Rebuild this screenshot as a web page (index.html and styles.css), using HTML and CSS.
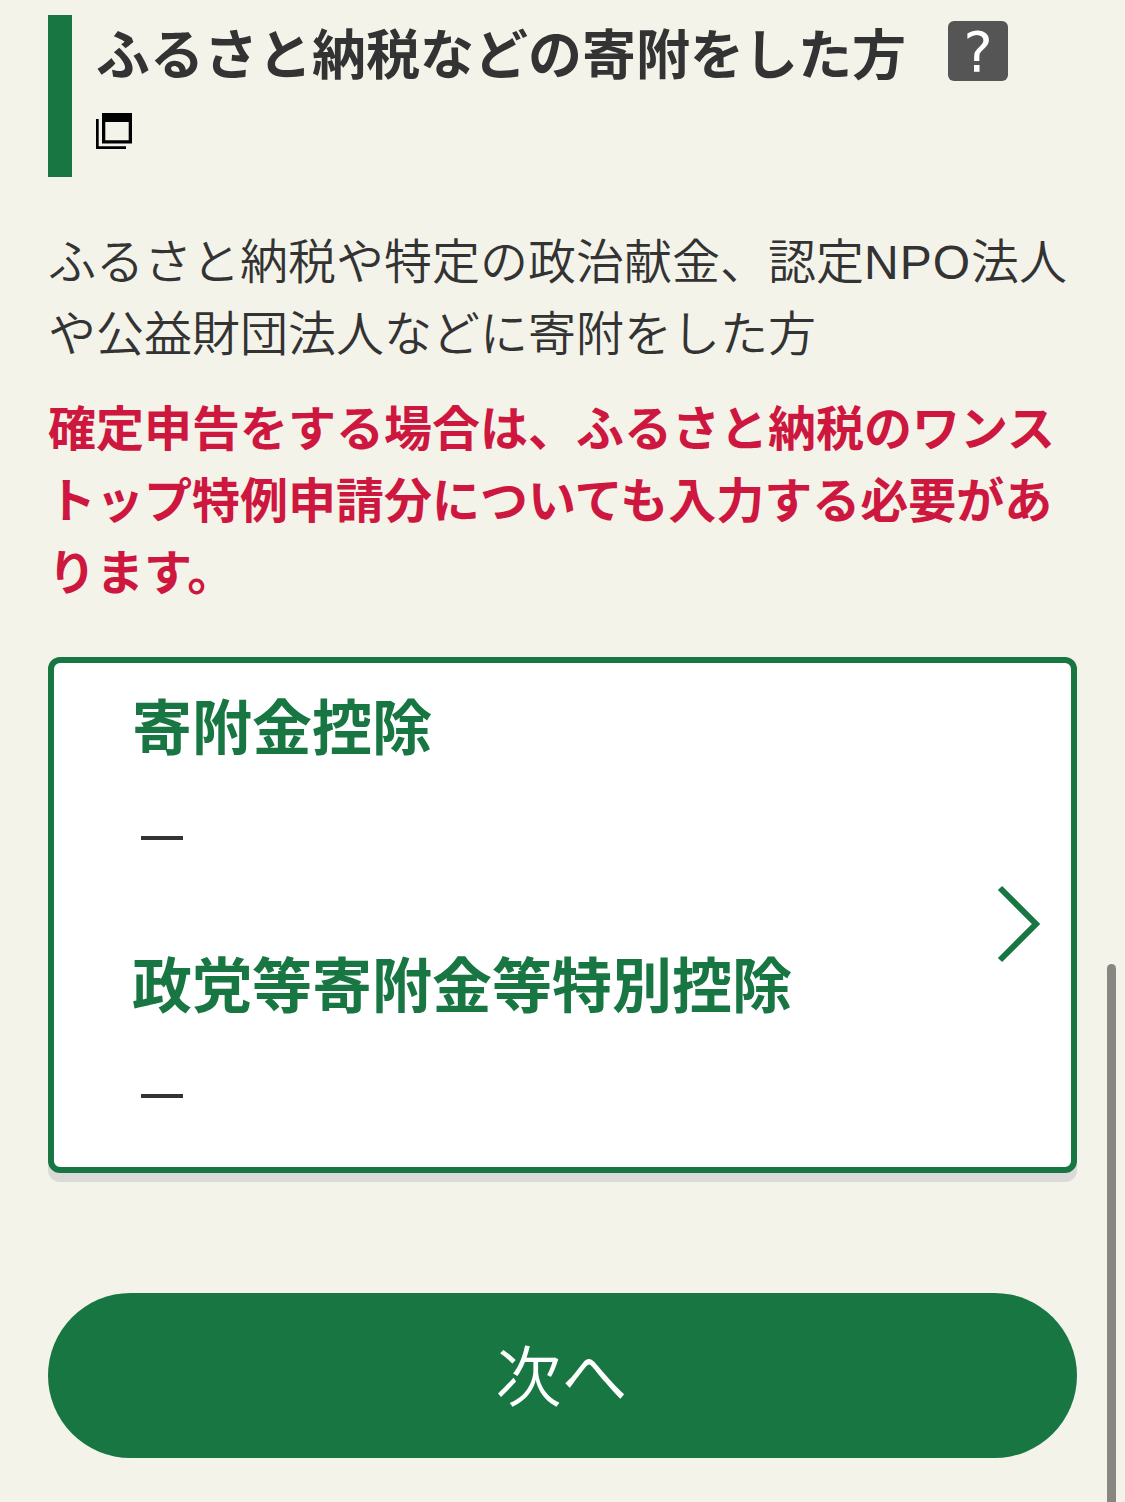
FILE: index.html
```html
<!DOCTYPE html>
<html lang="ja">
<head>
<meta charset="utf-8">
<title>寄附金控除</title>
<link rel="stylesheet" href="styles.css">
</head>
<body>
<main class="page">
  <h2 class="heading">
    <span class="heading-text">ふるさと納税などの寄附をした方</span>
    <span class="help">?</span>
    <svg class="window-icon" viewBox="0 0 36 36"><path d="M0 6h2.700v27.300H30V36H0z"/><path fill-rule="evenodd" d="M6 0h30v30.500H6zM9.300 9v18.300h23.400V9z"/></svg>
  </h2>
  <p class="lead">ふるさと納税や特定の政治献金、認定<span class="latin">NPO</span>法人<br>や公益財団法人などに寄附をした方</p>
  <p class="warning">確定申告をする場合は、ふるさと納税のワンス<br>トップ特例申請分についても入力する必要があ<br>ります。</p>
  <a class="card">
    <span class="card-body">
      <span class="item">寄附金控除</span>
      <span class="value"><span class="dash"></span></span>
      <span class="item">政党等寄附金等特別控除</span>
      <span class="value last"><span class="dash"></span></span>
    </span>
    <svg class="chevron" viewBox="0 0 44 78"><path d="M3 3 39 39 3 75"/></svg>
  </a>
  <button class="next">次へ</button>
</main>
<div class="scrollbar"></div>
</body>
</html>
```
FILE: styles.css
```css
* { box-sizing: border-box; }
body {
  margin: 0;
  height: 1502px;
  overflow: hidden;
  background: #f4f3ea;
  color: #333;
  font-family: "Noto Sans CJK JP", sans-serif;
}
.page { padding: 15px 48px 0; }
.heading {
  display: flex;
  flex-wrap: wrap;
  align-content: flex-start;
  height: 162px;
  margin: 0;
  padding-left: 24px;
  border-left: 24px solid #187643;
  font-size: 54px;
  line-height: 81px;
  font-weight: 700;
}
.heading-text { height: 85px; margin-top: -4px; white-space: nowrap; }
.help {
  width: 60px;
  height: 60px;
  margin: 6px 60px 0 42px;
  border-radius: 6px;
  background: #555;
  color: #fff;
  font: 400 55px/63px "DejaVu Sans", sans-serif;
  text-align: center;
}
.window-icon { width: 36px; height: 36px; margin-top: 17px; fill: #000; }
.lead, .warning {
  margin: 0;
  font-size: 48px;
  line-height: 72px;
  white-space: nowrap;
}
.lead { height: 144px; margin-top: 45px; font-weight: 350; }
.latin {
  font-family: "Liberation Sans", sans-serif;
  line-height: 1;
  letter-spacing: 1px;
}
.warning { margin-top: 23px; color: #ce173f; font-weight: 700; }
.card {
  display: flex;
  justify-content: space-between;
  height: 516px;
  margin-top: 52px;
  padding: 16px 30px 0 78px;
  border: 6px solid #187643;
  border-radius: 12px;
  background: #fff;
  box-shadow: 0 9px 0 #dadad8;
}
.card-body { display: flex; flex-direction: column; }
.item {
  color: #187643;
  font-size: 60px;
  line-height: 90px;
  font-weight: 700;
}
.value { height: 168px; padding: 67px 0 0 9px; }
.value.last { height: auto; }
.dash { display: block; width: 42px; height: 4px; background: #333; }
.chevron {
  width: 44px;
  height: 78px;
  margin-top: 206px;
  fill: none;
  stroke: #187643;
  stroke-width: 6;
}
.next {
  display: block;
  width: 100%;
  height: 165px;
  margin-top: 120px;
  padding: 0 2px 7px 0;
  border: 0;
  border-radius: 83px;
  background: #187643;
  color: #fff;
  font: 350 66px/158px "Noto Sans CJK JP", sans-serif;
}
.scrollbar {
  position: absolute;
  top: 964px;
  right: 9px;
  width: 9px;
  height: 560px;
  border-radius: 5px;
  background: #878681;
}
```
